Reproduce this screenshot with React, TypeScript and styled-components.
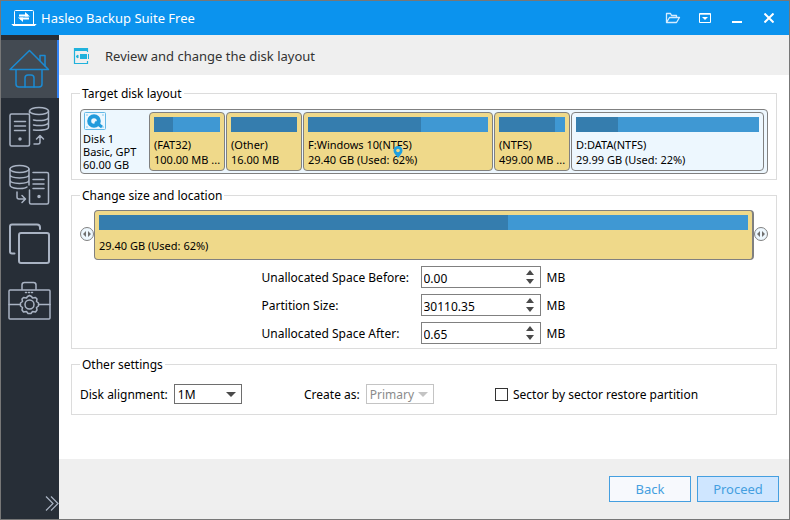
import React from "react";
import styled, { createGlobalStyle } from "styled-components";

const GlobalStyle = createGlobalStyle`
  *, *::before, *::after { box-sizing: border-box; }
  body {
    margin: 0;
    font-family: "Noto Sans", "Open Sans", sans-serif;
    font-size: 12px;
    line-height: 17px;
    color: #000;
  }
  button, input, select { font: inherit; color: inherit; }
  svg { display: block; flex: none; }
`;

const Window = styled.div`
  display: flex;
  flex-direction: column;
  min-height: 100vh;
  border: 1px solid #777;
  background: #fff;
`;

const TitleBar = styled.header`
  display: flex;
  align-items: center;
  height: 34px;
  padding: 0 10px;
  gap: 4px;
  background: #0b93ee;
  color: #fff;
`;

const AppTitle = styled.h1`
  flex: 1;
  margin: 0;
  font-size: 13px;
  font-weight: 400;
`;

const WindowButtons = styled.div`
  display: flex;
  gap: 12px;
`;

const WindowButton = styled.button`
  display: grid;
  place-items: center;
  width: 20px;
  height: 20px;
  padding: 0;
  border: 0;
  background: none;
`;

const Body = styled.div`
  display: flex;
  flex: 1;
`;

const Sidebar = styled.nav`
  display: flex;
  flex-direction: column;
  flex: none;
  width: 58px;
  padding-top: 5px;
  background: #272e37;
  color: #a9b3c3;
`;

const NavButton = styled.button<{ $active?: boolean }>`
  display: grid;
  place-items: center;
  height: 58px;
  padding: 0;
  border: 0;
  border-right: 2px solid ${(p) => (p.$active ? "#3584f5" : "transparent")};
  background: ${(p) => (p.$active ? "#434a52" : "transparent")};
  color: ${(p) => (p.$active ? "#1b8bd3" : "#a9b3c3")};
`;

const ExpandButton = styled.button`
  align-self: flex-end;
  margin-top: auto;
  padding: 0 0 8px;
  border: 0;
  background: none;
  color: #a9b3c3;
`;

const Content = styled.div`
  display: flex;
  flex: 1;
  flex-direction: column;
  min-width: 0;
`;

const PageHeader = styled.div`
  display: flex;
  align-items: center;
  gap: 14px;
  height: 40px;
  padding: 2px 14px 0;
  background: #efefef;
`;

const PageTitle = styled.h2`
  margin: 0;
  font-size: 13px;
  font-weight: 400;
  color: #333;
`;

const Groups = styled.main`
  display: flex;
  flex: 1;
  flex-direction: column;
  gap: 7px;
  padding: 10px 12px;
`;

const Group = styled.fieldset`
  min-width: 0;
  margin: 0;
  padding: 6px 8px 4px;
  border: 1px solid #dcdcdc;
`;

const GroupTitle = styled.legend`
  padding: 0 2px;
  line-height: 17px;
`;

const DiskStrip = styled.div`
  display: flex;
  margin: 1px 0;
  padding: 2px 3px 2px 0;
  border: 1px solid #808080;
  border-radius: 4px;
  background: #edf7fe;
`;

const DiskInfo = styled.div`
  flex: none;
  width: 68px;
  padding-left: 2px;
  font-size: 11px;
  line-height: 13px;
`;

const DiskIconBox = styled.div`
  padding-left: 1px;
  margin-bottom: 2px;
`;

const Partitions = styled.div`
  display: flex;
  flex: 1;
  gap: 1px;
  min-width: 0;
`;

const PartitionBox = styled.div<{ $grow?: number; $fill: string; $short?: boolean }>`
  position: relative;
  display: flex;
  flex-direction: column;
  flex: ${(p) => p.$grow ?? 1} 1 0;
  min-width: 0;
  height: ${(p) => (p.$short ? 50 : 59)}px;
  padding: 4px;
  gap: ${(p) => (p.$short ? 8 : 5)}px;
  border: 1px solid #808080;
  border-right-width: ${(p) => (p.$short ? 2 : 1)}px;
  border-radius: 4px;
  background: ${(p) => p.$fill};
  font-size: 11px;
  line-height: 15px;
`;

const UsageBar = styled.div`
  flex: none;
  height: 15px;
  background: #3f98d3;
`;

const Used = styled.div`
  height: 100%;
  background: #357dae;
`;

const PartitionText = styled.div`
  white-space: nowrap;
`;

const PinMarker = styled.span`
  position: absolute;
  top: 33px;
  left: 50%;
  transform: translateX(-50%);
`;

const ResizeRow = styled.div`
  display: flex;
  align-items: center;
`;

const Handle = styled.button`
  padding: 0 0 2px;
  border: 0;
  background: none;
`;

const SizeForm = styled.div`
  display: grid;
  grid-template-columns: 153px 120px 20px;
  gap: 6px;
  align-items: center;
  justify-content: center;
  margin: 6px 20px 0 0;
`;

const SpinBox = styled.div`
  display: flex;
  height: 22px;
  border: 1px solid #808080;
`;

const SpinInput = styled.input`
  flex: 1;
  min-width: 0;
  padding: 2px 2px 0;
  border: 0;
  outline: 0;
  background: none;
`;

const SpinButtons = styled.div`
  display: flex;
  flex: none;
  flex-direction: column;
  justify-content: center;
  gap: 4px;
  width: 20px;
`;

const SpinButton = styled.button`
  display: grid;
  justify-items: center;
  padding: 0;
  border: 0;
  background: none;
  color: #4a4a4a;
`;

const Settings = styled.div`
  display: grid;
  grid-template-columns: 224fr 191fr 273fr;
  align-items: center;
  padding: 5px 0 6px;
`;

const Field = styled.div`
  display: flex;
  align-items: center;
  gap: 6px;
`;

const SelectBox = styled.div<{ $width: number; $muted?: boolean }>`
  display: grid;
  align-items: center;
  width: ${(p) => p.$width}px;
  height: 20px;
  border: 1px solid ${(p) => (p.$muted ? "#c4c4c4" : "#6e6e6e")};
  color: ${(p) => (p.$muted ? "#8b8b8b" : "#000")};

  > * { grid-area: 1 / 1; }
  > svg {
    justify-self: end;
    margin-right: 5px;
    pointer-events: none;
    color: ${(p) => (p.$muted ? "#c4c4c4" : "#4a4a4a")};
  }
`;

const Select = styled.select`
  width: 100%;
  height: 18px;
  padding: 0 3px;
  border: 0;
  appearance: none;
  background: none;
  opacity: 1;
`;

const Checkbox = styled.input`
  appearance: none;
  width: 13px;
  height: 13px;
  margin: 0;
  border: 1px solid #333;
  background: #fff;
  &:checked { background: #3f98d3; }
`;

const CheckField = styled.label`
  display: flex;
  align-items: center;
  gap: 5px;
`;

const Footer = styled.footer`
  display: flex;
  justify-content: flex-end;
  gap: 6px;
  padding: 17px 10px;
  background: #efefef;
`;

const ActionButton = styled.button<{ $primary?: boolean }>`
  width: 82px;
  height: 26px;
  padding: 1px 0 0;
  border: 1px solid #459fe0;
  background: ${(p) => (p.$primary ? "#cfe6ff" : "#f7f9fd")};
  color: #459fe0;
  font-size: 13px;
`;

const LaptopIcon = () => (
  <svg width="26" height="18" viewBox="0 0 26 18" fill="none" stroke="#fff">
    <path d="M3.5 15V2.5q0-1 1-1h17q1 0 1 1V15" />
    <path d="M1 15.5h24l-1 1H2z" strokeWidth="1" />
    <path d="M8 6.5h9M9 9.5h9" strokeWidth="2" />
    <path d="M14 3l5 4.5h-5zM12 13L7 8.5h5z" fill="#fff" stroke="none" />
  </svg>
);

const FolderIcon = () => (
  <svg width="16" height="12" viewBox="0 0 16 12" fill="none" stroke="#d5ecff" strokeWidth="1.3" strokeLinejoin="round">
    <path d="M1.5 10.5V1.5h4l1 2h5v2M1.5 10.5l3-5h10l-3 5z" />
  </svg>
);

const MenuIcon = () => (
  <svg width="12" height="10" viewBox="0 0 12 10" fill="none" stroke="#fff">
    <path d="M.5.5h11v9H.5zM.5 1.2h11" />
    <path d="M3 4h6L6 7z" fill="#fff" stroke="none" />
  </svg>
);

const MinimizeIcon = () => (
  <svg width="10" height="10" viewBox="0 0 10 10">
    <path d="M0 8h10v2H0z" fill="#fff" />
  </svg>
);

const CloseIcon = () => (
  <svg width="10" height="10" viewBox="0 0 10 10" stroke="#fff" strokeWidth="2">
    <path d="M.5.5l9 9M9.5.5l-9 9" />
  </svg>
);

const navSvg = {
  width: 44,
  height: 44,
  viewBox: "0 0 44 44",
  fill: "none",
  stroke: "currentColor",
  strokeWidth: 1.5,
  strokeLinejoin: "round" as const,
  strokeLinecap: "round" as const,
};

const HomeIcon = () => (
  <svg {...navSvg}>
    <path d="M3 22.5L22.5 3.5l19 19zM9 22.5V37q0 3 3 3h20q3 0 3-3V22.5" />
    <path d="M18 40V31q0-3 3-3h3q3 0 3 3v9M33 13.500V8.500h5V19" />
  </svg>
);

const BackupIcon = () => (
  <svg {...navSvg}>
    <rect x="3" y="9" width="19.500" height="32" rx="1.500" />
    <path d="M7.500 16.500h11M7.500 21h11M7.500 25.500h11" />
    <circle cx="13" cy="34" r="1" fill="currentColor" />
    <ellipse cx="32" cy="6" rx="9.500" ry="3.500" />
    <path d="M22.500 6v2M41.500 6v16c0 2.500-6 4-15 3M41.500 12c0 3-7 4.500-15 3M41.500 17c0 3-7 4.500-15 3" />
    <path d="M27 39h4q2 0 2-2v-6M29.500 34l3.500-3.500 3.500 3.500" />
  </svg>
);

const RestoreIcon = () => (
  <svg {...navSvg}>
    <ellipse cx="12.500" cy="6" rx="9.500" ry="3.500" />
    <path d="M3 6v16c0 4 14 4.500 17 2M22 6v16M3 11.500c0 4.500 19 4.500 19 0M3 17c0 4.500 19 4.500 19 0" />
    <path d="M26 9.500h14q1.500 0 1.500 1.500v28.500q0 1.500-1.500 1.500H24q-1.500 0-1.500-1.500V27" />
    <path d="M26 16.500h11M26 21h11M26 25.500h11" />
    <circle cx="32" cy="33.500" r="1" fill="currentColor" />
    <path d="M10 29v5q0 2 2 2h6M15 32.500l3.500 3.500-3.500 3.500" />
  </svg>
);

const CloneIcon = () => (
  <svg {...navSvg} strokeWidth={2}>
    <path d="M7.500 32.500H5q-2 0-2-2v-25q0-2 2-2h25q3 0 3 3V8" />
    <rect x="12" y="12" width="30" height="30" rx="2" />
  </svg>
);

const ToolsIcon = () => (
  <svg {...navSvg}>
    <path d="M15 10.500V6q0-2.500 2.500-2.500h9Q29 3.500 29 6v4.500" />
    <rect x="2" y="11" width="41" height="29" rx="1" />
    <path d="M2 25.500h11M32 25.500h11" />
    <path d="M18.500 13.500h8" strokeDasharray="1 2" />
    <circle cx="22.500" cy="25.500" r="4.500" />
    <path d="M20.500 17.500l2-1 2 1 1 1.500 3-.5 1.500 1.500-.5 2.500 2 1.500v3l-2 1.500.5 2.500-1.500 2-3-.5-1.500 2h-3l-1.500-2-3 .5-1.500-2 .5-2.500-2-1.500v-3l2-1.500-.5-2.500 1.500-1.500 3 .5z" />
  </svg>
);

const ChevronsIcon = () => (
  <svg width="14" height="15" viewBox="0 0 14 15" fill="none" stroke="currentColor" strokeWidth="1.2">
    <path d="M1 .5l7 7-7 7M6 .5l7 7-7 7" />
  </svg>
);

const LayoutIcon = () => (
  <svg width="18" height="18" viewBox="0 0 18 18" fill="none" stroke="#20b2dc" strokeWidth="1.2">
    <path d="M14.500 5V1.500H1.500v15h13V14" />
    <path d="M1 1h14v3H1zM7 7h7v5H7z" fill="#20b2dc" stroke="none" />
    <path d="M3 9.500l2-1.500v3z" fill="#20b2dc" strokeWidth="1" />
    <path d="M15.500 7v5" strokeWidth="1" />
  </svg>
);

const DiskIcon = () => (
  <svg width="22" height="18" viewBox="0 0 22 18" fill="none" stroke="#219bdc">
    <rect x=".5" y=".5" width="21" height="17" rx="1" stroke="#63b8e6" />
    <circle cx="10" cy="9" r="4.800" strokeWidth="4" />
    <path d="M11 10l7 5" strokeWidth="3" />
    <path d="M2.500 3h1M18.500 3h1M2.500 15h1M18.500 15h1" />
  </svg>
);

const PinIcon = () => (
  <svg width="10" height="12" viewBox="0 0 10 12">
    <path d="M5 12C3 9 .5 7.500.5 4.500a4.500 4.500 0 019 0C9.500 7.500 7 9 5 12z" fill="#1e9fe0" />
    <circle cx="5" cy="4.500" r="1.800" fill="#efd98a" />
  </svg>
);

const HandleIcon = () => (
  <svg width="14" height="14" viewBox="0 0 14 14">
    <circle cx="7" cy="7" r="6.500" fill="#edf7fe" stroke="#808080" />
    <path d="M6 4v6L3 7zM8 4v6l3-3z" fill="#707070" />
  </svg>
);

const UpIcon = () => (
  <svg width="8" height="5" viewBox="0 0 8 5">
    <path d="M0 5l4-5 4 5z" fill="currentColor" />
  </svg>
);

const DownIcon = ({ width = 8 }: { width?: number }) => (
  <svg width={width} height="5" viewBox="0 0 8 5" preserveAspectRatio="none">
    <path d="M0 0h8L4 5z" fill="currentColor" />
  </svg>
);

const YELLOW = "#efd98a";
const PALE = "#edf7fe";

type PartitionInfo = { name?: string; size: string; used: number; grow?: number; fill: string; pinned?: boolean };

const partitions: PartitionInfo[] = [
  { name: "(FAT32)", size: "100.00 MB ...", used: 29, grow: 66, fill: YELLOW },
  { name: "(Other)", size: "16.00 MB", used: 100, grow: 66, fill: YELLOW },
  { name: "F:Windows 10(NTFS)", size: "29.40 GB (Used: 62%)", used: 63, grow: 180, fill: YELLOW, pinned: true },
  { name: "(NTFS)", size: "499.00 MB ...", used: 85, grow: 66, fill: YELLOW },
  { name: "D:DATA(NTFS)", size: "29.99 GB (Used: 22%)", used: 23, grow: 183, fill: PALE },
];

const selected: PartitionInfo = { size: "29.40 GB (Used: 62%)", used: 63, fill: YELLOW };

const Partition = ({ info, short }: { info: PartitionInfo; short?: boolean }) => (
  <PartitionBox $grow={info.grow} $fill={info.fill} $short={short}>
    <UsageBar>
      <Used style={{ width: `${info.used}%` }} />
    </UsageBar>
    <div>
      {info.name && <PartitionText>{info.name}</PartitionText>}
      <PartitionText>{info.size}</PartitionText>
    </div>
    {info.pinned && (
      <PinMarker>
        <PinIcon />
      </PinMarker>
    )}
  </PartitionBox>
);

const SizeField = ({ id, label, initial }: { id: string; label: string; initial: string }) => {
  const [value, setValue] = React.useState(initial);
  const step = (delta: number) => setValue((v) => Math.max(0, (parseFloat(v) || 0) + delta).toFixed(2));
  return (
    <>
      <label htmlFor={id}>{label}</label>
      <SpinBox>
        <SpinInput id={id} inputMode="decimal" value={value} onChange={(e) => setValue(e.target.value)} />
        <SpinButtons>
          <SpinButton type="button" aria-label="Increase" onClick={() => step(1)}>
            <UpIcon />
          </SpinButton>
          <SpinButton type="button" aria-label="Decrease" onClick={() => step(-1)}>
            <DownIcon />
          </SpinButton>
        </SpinButtons>
      </SpinBox>
      <span>MB</span>
    </>
  );
};

const navItems = [
  { label: "Home", Icon: HomeIcon },
  { label: "Backup", Icon: BackupIcon },
  { label: "Restore", Icon: RestoreIcon },
  { label: "Clone", Icon: CloneIcon },
  { label: "Tools", Icon: ToolsIcon },
];

const windowItems = [
  { label: "Open", Icon: FolderIcon },
  { label: "Menu", Icon: MenuIcon },
  { label: "Minimize", Icon: MinimizeIcon },
  { label: "Close", Icon: CloseIcon },
];

export default function App() {
  return (
    <Window>
      <GlobalStyle />
      <TitleBar>
        <LaptopIcon />
        <AppTitle>Hasleo Backup Suite Free</AppTitle>
        <WindowButtons>
          {windowItems.map(({ label, Icon }) => (
            <WindowButton key={label} type="button" aria-label={label}>
              <Icon />
            </WindowButton>
          ))}
        </WindowButtons>
      </TitleBar>
      <Body>
        <Sidebar>
          {navItems.map(({ label, Icon }, i) => (
            <NavButton key={label} type="button" aria-label={label} $active={i === 0}>
              <Icon />
            </NavButton>
          ))}
          <ExpandButton type="button" aria-label="Expand">
            <ChevronsIcon />
          </ExpandButton>
        </Sidebar>
        <Content>
          <PageHeader>
            <LayoutIcon />
            <PageTitle>Review and change the disk layout</PageTitle>
          </PageHeader>
          <Groups>
            <Group>
              <GroupTitle>Target disk layout</GroupTitle>
              <DiskStrip>
                <DiskInfo>
                  <DiskIconBox>
                    <DiskIcon />
                  </DiskIconBox>
                  <div>Disk 1</div>
                  <div>Basic, GPT</div>
                  <div>60.00 GB</div>
                </DiskInfo>
                <Partitions>
                  {partitions.map((info) => (
                    <Partition key={info.name} info={info} />
                  ))}
                </Partitions>
              </DiskStrip>
            </Group>
            <Group>
              <GroupTitle>Change size and location</GroupTitle>
              <ResizeRow>
                <Handle type="button" aria-label="Resize start">
                  <HandleIcon />
                </Handle>
                <Partition info={selected} short />
                <Handle type="button" aria-label="Resize end">
                  <HandleIcon />
                </Handle>
              </ResizeRow>
              <SizeForm>
                <SizeField id="before" label="Unallocated Space Before:" initial="0.00" />
                <SizeField id="size" label="Partition Size:" initial="30110.35" />
                <SizeField id="after" label="Unallocated Space After:" initial="0.65" />
              </SizeForm>
            </Group>
            <Group>
              <GroupTitle>Other settings</GroupTitle>
              <Settings>
                <Field>
                  <label htmlFor="alignment">Disk alignment:</label>
                  <SelectBox $width={68}>
                    <Select id="alignment">
                      <option>1M</option>
                    </Select>
                    <DownIcon width={10} />
                  </SelectBox>
                </Field>
                <Field>
                  <label htmlFor="create">Create as:</label>
                  <SelectBox $width={68} $muted>
                    <Select id="create" disabled>
                      <option>Primary</option>
                    </Select>
                    <DownIcon width={10} />
                  </SelectBox>
                </Field>
                <CheckField>
                  <Checkbox type="checkbox" />
                  Sector by sector restore partition
                </CheckField>
              </Settings>
            </Group>
          </Groups>
          <Footer>
            <ActionButton type="button">Back</ActionButton>
            <ActionButton type="button" $primary>
              Proceed
            </ActionButton>
          </Footer>
        </Content>
      </Body>
    </Window>
  );
}
